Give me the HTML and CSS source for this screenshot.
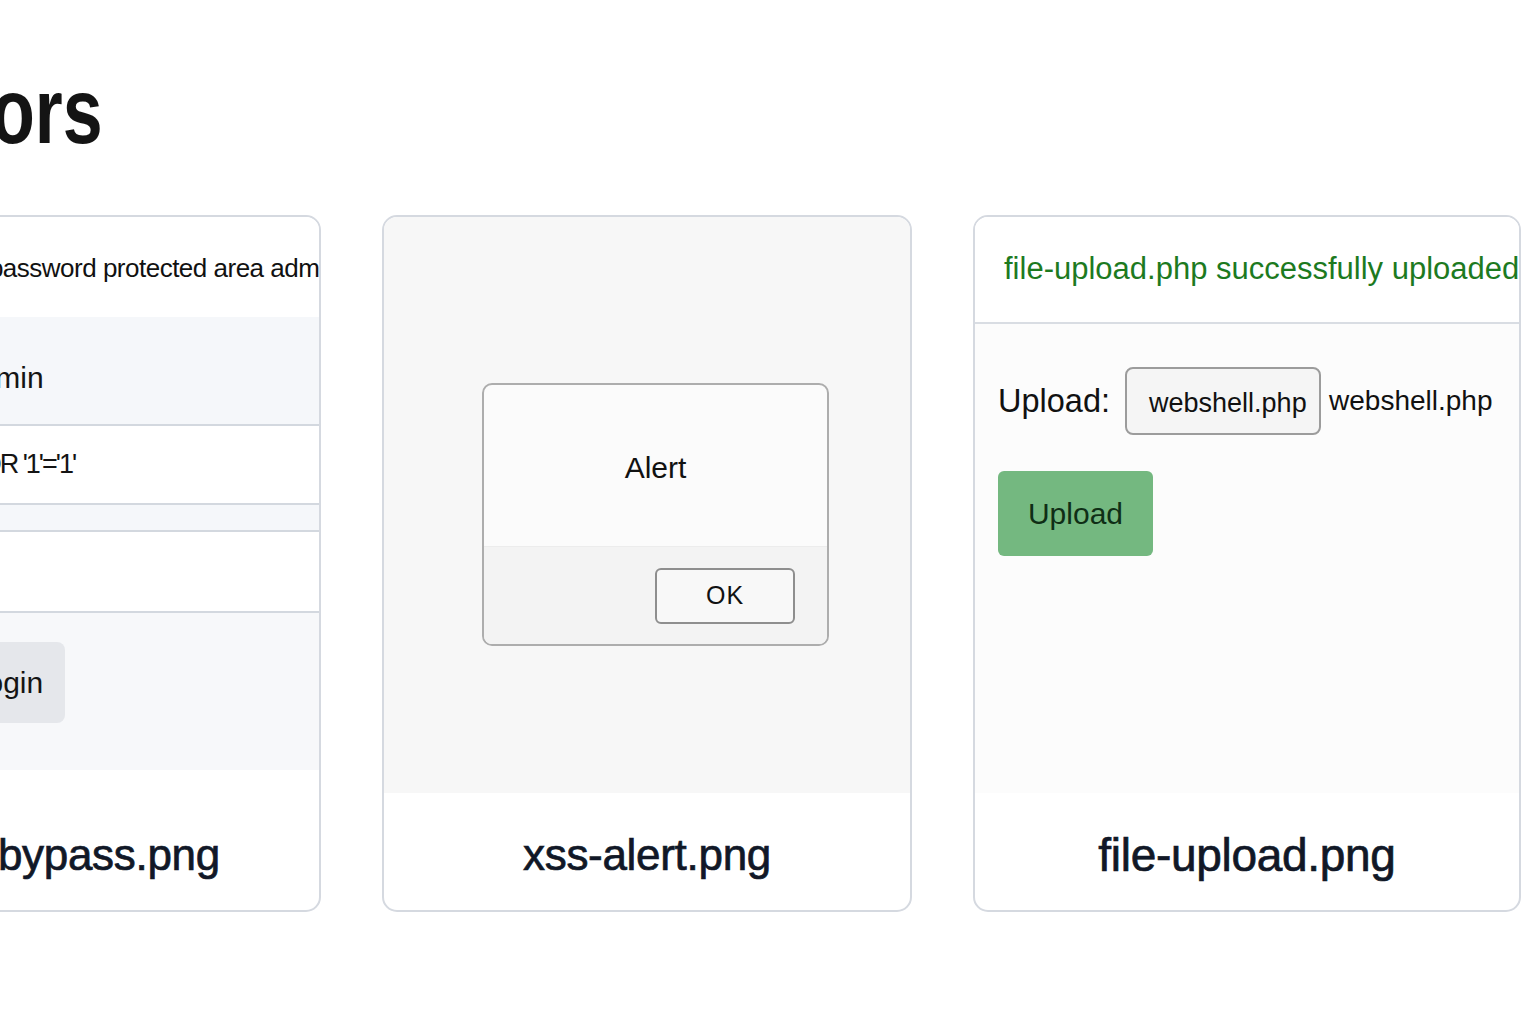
FILE: index.html
```html
<!DOCTYPE html>
<html lang="en">
<head>
<meta charset="utf-8">
<title>Attack Vectors</title>
<link rel="stylesheet" href="styles.css">
</head>
<body>
<main class="page">
  <h1 class="title">Attack Vectors</h1>
  <section class="cards">
    <article class="card">
      <div class="shot shot-login">
        <div class="login-head">Welcome to the password protected area admin panel</div>
        <div class="login-row login-user"><span class="lbl">Username</span><span class="val">admin</span></div>
        <div class="login-row login-input"><span class="lbl">Password</span><span class="val val-sql">' OR '1'='1'</span></div>
        <div class="login-strip"></div>
        <div class="login-row login-input"><span class="lbl">Token</span></div>
        <div class="login-foot"><button class="login-btn" type="button">Login</button></div>
      </div>
      <div class="caption">login-bypass.png</div>
    </article>

    <article class="card">
      <div class="shot shot-xss">
        <div class="dialog">
          <div class="dialog-body">Alert</div>
          <div class="dialog-actions"><button class="ok-btn" type="button">OK</button></div>
        </div>
      </div>
      <div class="caption">xss-alert.png</div>
    </article>

    <article class="card card-wide">
      <div class="shot shot-upload">
        <div class="upload-msg">file-upload.php successfully uploaded</div>
        <div class="upload-body">
          <div class="upload-row">
            <span class="upload-label">Upload:</span>
            <span class="file-btn">webshell.php</span>
            <span class="file-name">webshell.php</span>
          </div>
          <button class="upload-btn" type="button">Upload</button>
        </div>
      </div>
      <div class="caption caption-wide">file-upload.png</div>
    </article>
  </section>
</main>
</body>
</html>
```

FILE: styles.css
```css
html, body {
  margin: 0;
  padding: 0;
  background: #ffffff;
}

body {
  overflow: hidden;
  font-family: "Liberation Sans", Arial, sans-serif;
  color: #111827;
}

.page {
  margin-left: -209px;
  width: 1730px;
}

.title {
  margin: 65px 0 0 -187px;
  font-family: "Liberation Sans", Arial, sans-serif;
  font-weight: 700;
  font-size: 92px;
  line-height: 92px;
  color: #141414;
  white-space: nowrap;
  transform: scaleX(0.78);
  transform-origin: left center;
}

.cards {
  margin-top: 58px;
  display: grid;
  grid-template-columns: 530px 530px 548px;
  column-gap: 61px;
  align-items: start;
}

.card {
  height: 697px;
  box-sizing: border-box;
  border: 2px solid #d5d9e0;
  border-radius: 15px;
  overflow: hidden;
  display: flex;
  flex-direction: column;
  background: #ffffff;
}

.shot {
  flex: none;
  height: 576px;
  box-sizing: border-box;
  overflow: hidden;
}

.caption {
  flex: 1;
  display: flex;
  align-items: flex-end;
  justify-content: center;
  padding-bottom: 30px;
  font-size: 44px;
  line-height: 50px;
  color: #111827;
  white-space: nowrap;
  letter-spacing: -0.3px;
  -webkit-text-stroke: 0.7px #111827;
}

.caption-wide {
  font-size: 46px;
}

/* ---------- login bypass ---------- */
.shot-login {
  height: 553px;
  display: flex;
  flex-direction: column;
  background: #ffffff;
}

.login-head {
  height: 100px;
  flex: none;
  display: flex;
  align-items: center;
  padding-left: 16px;
  padding-top: 2px;
  box-sizing: border-box;
  font-size: 26px;
  letter-spacing: -0.5px;
  color: #111111;
  white-space: nowrap;
}

.login-row {
  display: flex;
  align-items: center;
  padding-left: 24px;
  box-sizing: border-box;
  font-size: 30px;
  color: #141414;
  white-space: nowrap;
}

.lbl {
  width: 145px;
  flex: none;
}

.val-sql {
  margin-left: 10px;
  font-size: 27px;
  letter-spacing: -2px;
}

.login-user {
  height: 107px;
  background: #f5f7fa;
  padding-top: 14px;
}

.login-input {
  height: 81px;
  background: #ffffff;
  border-top: 2px solid #d3d8df;
  border-bottom: 2px solid #d3d8df;
}

.login-strip {
  height: 25px;
  background: #f5f7fa;
}

.login-input + .login-strip + .login-input {
  height: 83px;
}

.login-foot {
  flex: 1;
  background: #f7f8fa;
  padding: 29px 0 0 155px;
}

.login-btn {
  height: 81px;
  width: 117px;
  border: none;
  border-radius: 8px;
  background: #e5e7eb;
  font-family: "Liberation Sans", Arial, sans-serif;
  font-size: 30px;
  color: #141414;
  padding: 0;
}

/* ---------- xss alert ---------- */
.shot-xss {
  background: #f7f7f7;
  padding: 166px 0 0 98px;
}

.dialog {
  width: 347px;
  height: 263px;
  box-sizing: border-box;
  border: 2px solid #adadad;
  border-radius: 10px;
  overflow: hidden;
  display: flex;
  flex-direction: column;
  background: #fbfbfb;
}

.dialog-body {
  height: 161px;
  flex: none;
  display: flex;
  align-items: center;
  justify-content: center;
  padding-top: 4px;
  box-sizing: border-box;
  font-size: 30px;
  color: #111111;
}

.dialog-actions {
  flex: 1;
  display: flex;
  justify-content: flex-end;
  align-items: center;
  padding-right: 32px;
  background: #f3f3f3;
  border-top: 1px solid #ececec;
}

.ok-btn {
  width: 140px;
  height: 56px;
  box-sizing: border-box;
  border: 2px solid #8e8e8e;
  border-radius: 6px;
  background: #f8f8f8;
  font-family: "Liberation Sans", Arial, sans-serif;
  font-size: 25px;
  letter-spacing: 1px;
  color: #111111;
  padding: 0;
}

/* ---------- file upload ---------- */
.shot-upload {
  background: #fcfcfc;
  display: flex;
  flex-direction: column;
}

.upload-msg {
  height: 107px;
  flex: none;
  box-sizing: border-box;
  border-bottom: 2px solid #d9dde3;
  background: #ffffff;
  display: flex;
  align-items: center;
  padding-left: 29px;
  padding-bottom: 2px;
  font-size: 31px;
  color: #1d7a1f;
  white-space: nowrap;
}

.upload-body {
  padding: 43px 0 0 23px;
}

.upload-row {
  display: flex;
  align-items: center;
  white-space: nowrap;
}

.upload-label {
  font-size: 32.5px;
  color: #111111;
}

.file-btn {
  margin-left: 15px;
  width: 196px;
  height: 68px;
  box-sizing: border-box;
  border: 2px solid #9c9c9c;
  border-radius: 8px;
  background: #f5f5f5;
  display: flex;
  align-items: center;
  padding: 4px 0 0 22px;
  font-size: 27px;
  color: #111111;
}

.file-name {
  margin-left: 8px;
  font-size: 28px;
  color: #111111;
}

.upload-btn {
  margin-top: 36px;
  width: 155px;
  height: 85px;
  border: none;
  border-radius: 6px;
  background: #74b880;
  font-family: "Liberation Sans", Arial, sans-serif;
  font-size: 30px;
  color: #0f2e16;
  padding: 0;
  display: block;
}
```
